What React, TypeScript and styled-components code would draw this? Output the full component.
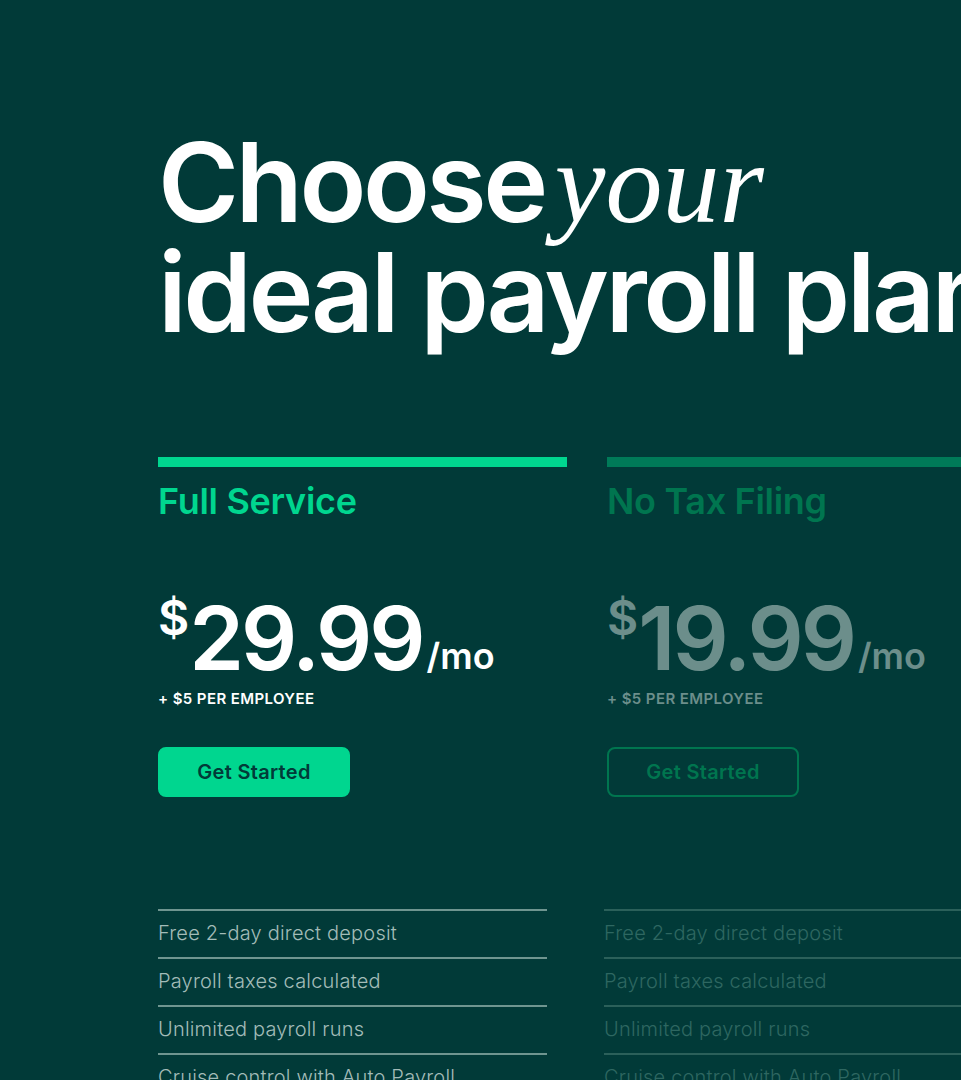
import { createGlobalStyle, styled } from "styled-components";

const GlobalStyle = createGlobalStyle`
  html, body {
    margin: 0;
    padding: 0;
    background-color: #013a38;
    overflow: hidden;
  }
  body {
    font-family: Inter, "Liberation Sans", sans-serif;
    color: white;
  }
`;

const Page = styled.main`
  width: 961px;
  height: 1080px;
  overflow: hidden;
  padding: 128px 0 0 158px;
  box-sizing: border-box;
`;

const Headline = styled.h1`
  margin: 0;
  font-size: 110px;
  line-height: 108px;
  font-weight: 600;
  letter-spacing: -3.5px;
  white-space: nowrap;
`;

const Fancy = styled.em`
  font-family: "Liberation Serif", "DejaVu Serif", serif;
  font-style: italic;
  font-weight: 400;
  font-size: 114px;
  letter-spacing: 0;
  margin-left: 10px;
`;

const Plans = styled.div`
  display: flex;
  gap: 40px;
  margin-top: 111px;
  width: max-content;
`;

const Plan = styled.section`
  width: 409px;
  display: flex;
  flex-direction: column;
  align-items: flex-start;
`;

const Bar = styled.div<{ $active?: boolean }>`
  align-self: stretch;
  height: 10px;
  background-color: ${(p) => (p.$active ? "#00d68f" : "#007a58")};
`;

const PlanName = styled.h2<{ $active?: boolean }>`
  margin: 13px 0 0;
  font-size: 36px;
  line-height: 42px;
  font-weight: 600;
  letter-spacing: -0.3px;
  color: ${(p) => (p.$active ? "#00d68f" : "#00754f")};
`;

const Price = styled.div<{ $active?: boolean }>`
  display: flex;
  align-items: flex-start;
  margin-top: 72px;
  color: ${(p) => (p.$active ? "#ffffff" : "#6c8e8b")};
  line-height: 1;
`;

const Currency = styled.span`
  font-size: 48px;
  font-weight: 600;
`;

const Amount = styled.span`
  font-size: 88px;
  font-weight: 600;
  letter-spacing: -3px;
`;

const Period = styled.span`
  font-size: 36px;
  font-weight: 600;
  align-self: flex-end;
  margin: 0 0 8px 4px;
`;

const Extra = styled.div<{ $active?: boolean }>`
  margin-top: 7px;
  font-size: 15px;
  font-weight: 600;
  letter-spacing: 0.4px;
  color: ${(p) => (p.$active ? "#ffffff" : "#6c8e8b")};
`;

const StartButton = styled.button<{ $active?: boolean }>`
  margin-top: 39px;
  width: 192px;
  height: 50px;
  border-radius: 8px;
  font-family: Inter, "Liberation Sans", sans-serif;
  font-size: 20px;
  font-weight: 600;
  letter-spacing: 0.3px;
  cursor: pointer;
  border: 2px solid ${(p) => (p.$active ? "#00d68f" : "#00754f")};
  background-color: ${(p) => (p.$active ? "#00d68f" : "transparent")};
  color: ${(p) => (p.$active ? "#013a38" : "#00754f")};
`;

const Features = styled.div`
  display: flex;
  gap: 57px;
  margin-top: 112px;
  width: max-content;
`;

const FeatureList = styled.ul<{ $active?: boolean }>`
  list-style: none;
  margin: 0;
  padding: 0;
  width: 389px;
  color: ${(p) => (p.$active ? "#a3bcb8" : "#2e6761")};
  border-color: ${(p) => (p.$active ? "#6f9590" : "#2b605a")};
`;

const Feature = styled.li`
  border-top: 2px solid;
  border-color: inherit;
  height: 48px;
  box-sizing: border-box;
  font-size: 20px;
  line-height: 44px;
  font-weight: 300;
  letter-spacing: 0.2px;
  white-space: nowrap;
`;

const plans = [
  { name: "Full Service", price: "29.99", active: true },
  { name: "No Tax Filing", price: "19.99", active: false },
];

const features = [
  "Free 2-day direct deposit",
  "Payroll taxes calculated",
  "Unlimited payroll runs",
  "Cruise control with Auto Payroll",
];

export default function App() {
  return (
    <Page>
      <GlobalStyle />
      <Headline>
        Choose<Fancy>your</Fancy>
        <br />
        ideal payroll plan
      </Headline>
      <Plans>
        {plans.map((plan) => (
          <Plan key={plan.name}>
            <Bar $active={plan.active} />
            <PlanName $active={plan.active}>{plan.name}</PlanName>
            <Price $active={plan.active}>
              <Currency>$</Currency>
              <Amount>{plan.price}</Amount>
              <Period>/mo</Period>
            </Price>
            <Extra $active={plan.active}>+ $5 PER EMPLOYEE</Extra>
            <StartButton $active={plan.active}>Get Started</StartButton>
          </Plan>
        ))}
      </Plans>
      <Features>
        {plans.map((plan) => (
          <FeatureList key={plan.name} $active={plan.active}>
            {features.map((f) => (
              <Feature key={f}>{f}</Feature>
            ))}
          </FeatureList>
        ))}
      </Features>
    </Page>
  );
}
